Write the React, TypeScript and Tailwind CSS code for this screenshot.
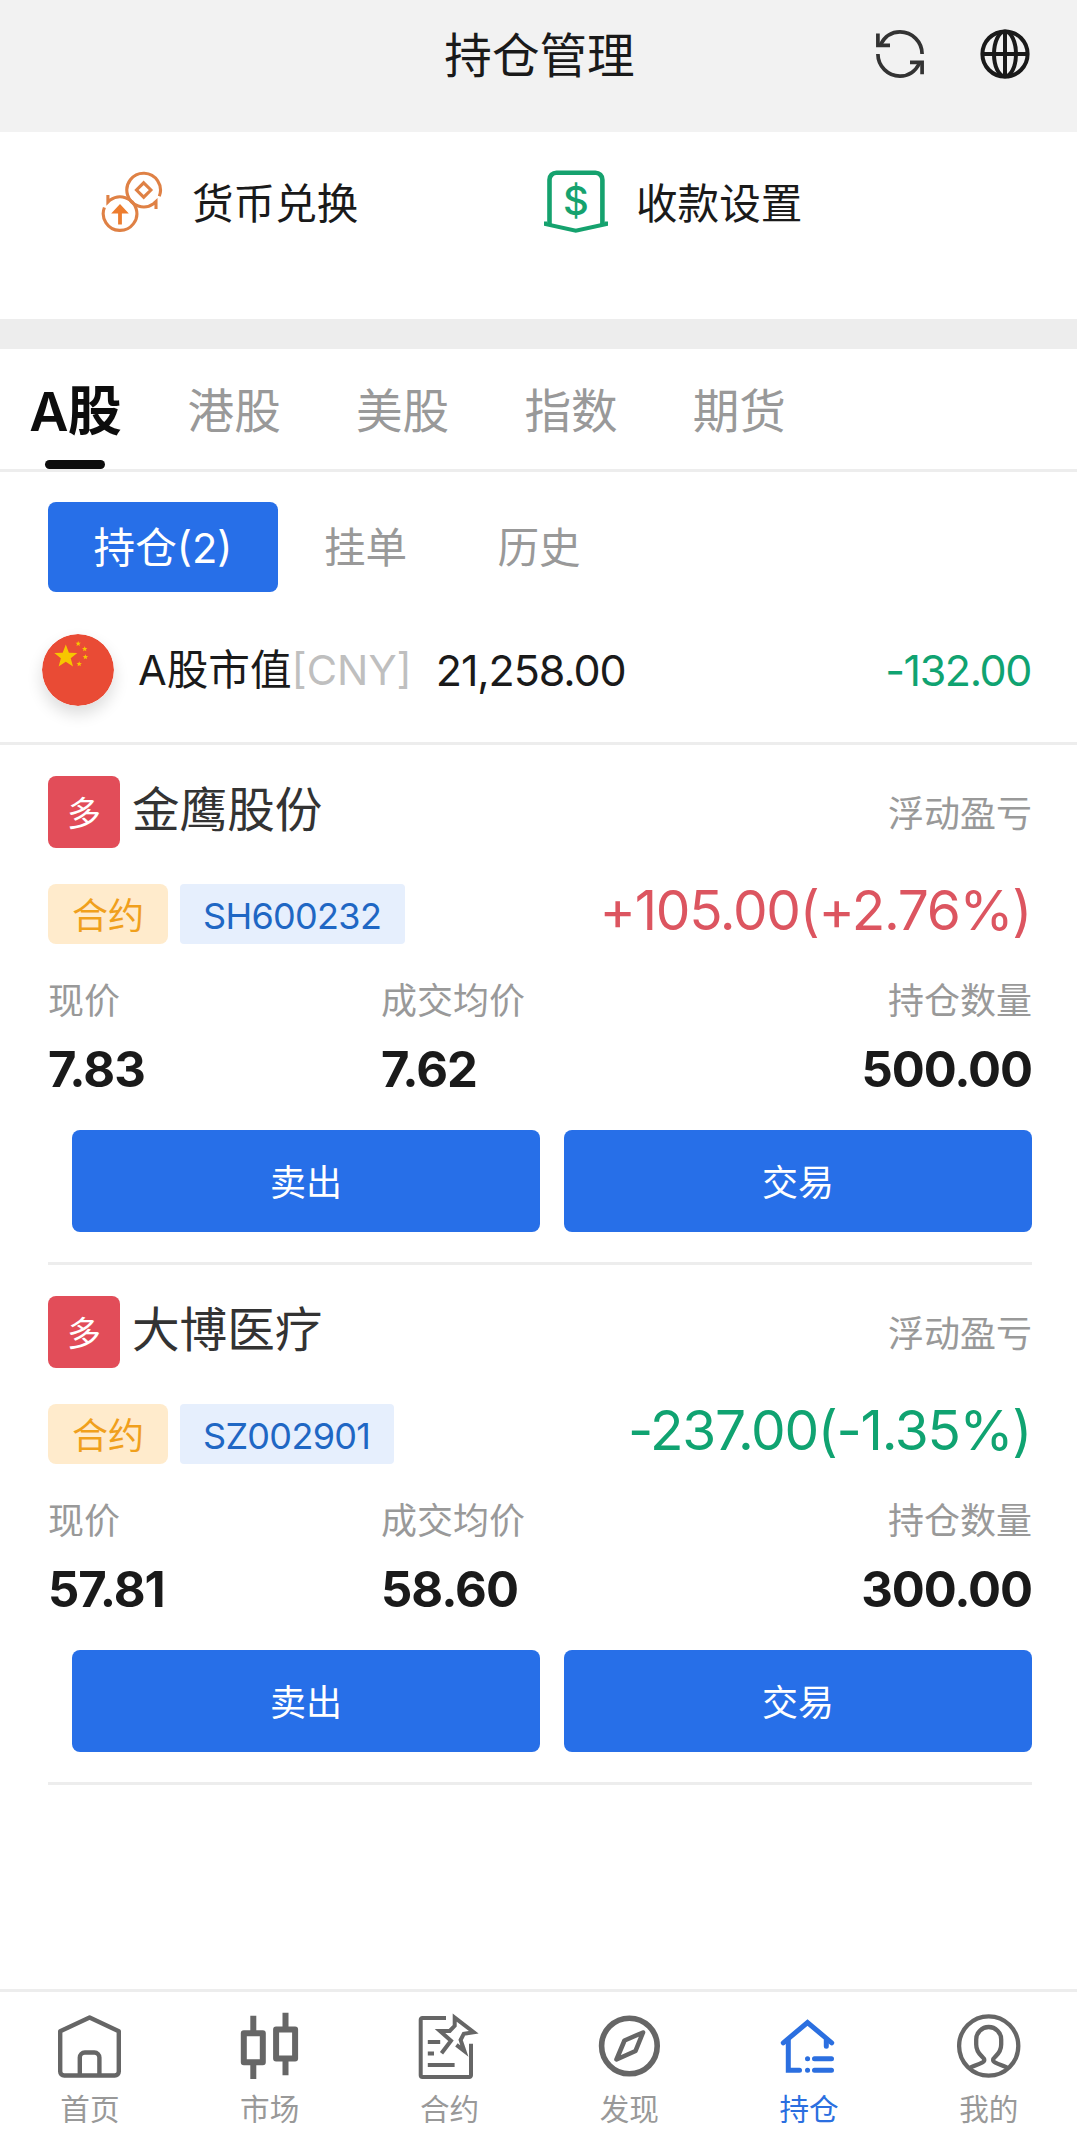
import { ReactNode } from "react";
import clsx from "clsx";

type Holding = {
  name: string;
  code: string;
  pnl: string;
  up: boolean;
  price: string;
  cost: string;
  amount: string;
};

const holdings: Holding[] = [
  {
    name: "金鹰股份",
    code: "SH600232",
    pnl: "+105.00(+2.76%)",
    up: true,
    price: "7.83",
    cost: "7.62",
    amount: "500.00",
  },
  {
    name: "大博医疗",
    code: "SZ002901",
    pnl: "-237.00(-1.35%)",
    up: false,
    price: "57.81",
    cost: "58.60",
    amount: "300.00",
  },
];

const markets = ["港股", "美股", "指数", "期货"];

function RefreshIcon() {
  return (
    <svg width="48" height="48" viewBox="0 0 48 48" fill="none" stroke="#333" strokeWidth="3.7">
      <path d="M46.1 24A22.2 22.2 0 0 0 24 1.9C15.5 1.9 8.5 7 4.6 14.5" />
      <path d="M1.9 3.5V15.3H14" />
      <path d="M1.9 24A22.2 22.2 0 0 0 24 46.1C32.5 46.1 39.5 41 43.4 33.5" />
      <path d="M46.1 44.2V32.3H34" />
    </svg>
  );
}

function GlobeIcon() {
  return (
    <svg width="50" height="50" viewBox="0 0 50 50" fill="none" stroke="#1a1a1a" strokeWidth="4">
      <circle cx="25" cy="25" r="22.6" />
      <ellipse cx="25" cy="25" rx="11" ry="22.6" />
      <path d="M25 2v46M2 25h46" />
    </svg>
  );
}

function ExchangeIcon() {
  return (
    <svg width="62" height="64" viewBox="0 0 62 64" fill="none" stroke="#df8145" strokeWidth="3.1">
      <path d="M58.3 26.2A16.8 16.8 0 1 0 52.5 33.7L55 31.5V39" />
      <path d="M42.7 12.8l7.2 7.2-7.2 7.2-7.2-7.2z" />
      <path d="M3.4 37.5A16.8 16.8 0 1 0 9.2 30L6.9 32.2V25" />
      <path d="M19 34l8.8 9.6h-6.9v11h-3.8v-11h-6.9z" fill="#ed7d2f" stroke="none" />
    </svg>
  );
}

function PaymentIcon() {
  return (
    <svg width="64" height="64" viewBox="0 0 64 64" fill="none" stroke="#15a26e" strokeWidth="4.6">
      <path d="M5.5 54V9.7a7 7 0 0 1 7-7h38.9a7 7 0 0 1 7 7V54" />
      <path d="M1 51.6v2.3l30.8 6.9 30.8-6.9v-2.3" strokeWidth="4" />
      <text
        x="31.8"
        y="44.8"
        fontSize="40"
        fontWeight="500"
        fontFamily="Inter"
        textAnchor="middle"
        fill="#15a26e"
        stroke="none"
      >
        $
      </text>
    </svg>
  );
}

const STAR = "M0-10L2.6-3.2 9.6-3 4.1 1.4 6 8.3 0 4.4-6 8.3-4.1 1.4-9.6-3-2.6-3.2z";

function ChinaFlag() {
  return (
    <svg
      width="72"
      height="72"
      viewBox="0 0 72 72"
      className="rounded-full shadow-[0_8px_16px_rgba(0,0,0,0.14)]"
    >
      <circle cx="36" cy="36" r="36" fill="#e94b35" />
      <g fill="#f7c600">
        <path d={STAR} transform="translate(23.8 22.5) scale(1.2)" />
        <path d={STAR} transform="translate(36.2 9.7) scale(.28)" />
        <path d={STAR} transform="translate(42.7 15) scale(.28)" />
        <path d={STAR} transform="translate(43.4 23) scale(.28)" />
        <path d={STAR} transform="translate(37.2 30) scale(.28)" />
      </g>
    </svg>
  );
}

function NavIcon({ children, color = "#666" }: { children: ReactNode; color?: string }) {
  return (
    <svg width="72" height="72" viewBox="0 0 72 72" fill="none" stroke={color}>
      {children}
    </svg>
  );
}

const navItems = [
  {
    label: "首页",
    icon: (
      <NavIcon>
        <g strokeWidth="4.4" strokeLinejoin="round">
          <path d="M35.6 7.5L64.8 21.3V61.5a4 4 0 0 1-4 4H10.2a4 4 0 0 1-4-4V21.3z" />
          <path d="M25.8 65V47.5a5 5 0 0 1 5-5h9.6a5 5 0 0 1 5 5V65" />
        </g>
      </NavIcon>
    ),
  },
  {
    label: "市场",
    icon: (
      <NavIcon>
        <g strokeWidth="6" strokeLinejoin="round">
          <rect x="9.8" y="23.3" width="19" height="29" />
          <path d="M19.3 5.7V22M19.3 53v16" />
          <rect x="42.1" y="19.6" width="19" height="29" />
          <path d="M51.5 2.7V19M51.5 49v16.3" />
        </g>
      </NavIcon>
    ),
  },
  {
    label: "合约",
    icon: (
      <NavIcon>
        <g strokeWidth="4">
          <path d="M33 8H9.4a1.7 1.7 0 0 0-1.7 1.7v55.6A1.7 1.7 0 0 0 9.4 67h46.9a1.7 1.7 0 0 0 1.7-1.7V33.7" />
          <path d="M14.8 32h12.4M14.8 43.5H21M14.8 55h26.8" />
          <path d="M28.5 43.3L38 30.7 27 21h9.7l5-5.2V7.6l19 14.6-9.9 1.6-3.2 6.2 3.8 11-8-6.2" />
        </g>
      </NavIcon>
    ),
  },
  {
    label: "发现",
    icon: (
      <NavIcon>
        <circle cx="36.4" cy="36" r="27.8" strokeWidth="5.6" />
        <path d="M50 22.5L31.5 30.5 23.5 49.5 42.5 41z" strokeWidth="4.6" strokeLinejoin="round" />
      </NavIcon>
    ),
  },
  {
    label: "持仓",
    active: true,
    icon: (
      <NavIcon color="#2b6fe0">
        <g strokeWidth="5" strokeLinecap="round">
          <path d="M10.3 32.8L34.5 12.6 58.7 32.8" />
          <path d="M15.3 30V60.3H26.5M53.3 30v6.3" />
          <path d="M34.5 48.7h.1M34.5 60.3h.1M41.5 48.7H58.5M41.5 60.3H58.5" />
        </g>
      </NavIcon>
    ),
  },
  {
    label: "我的",
    icon: (
      <NavIcon>
        <g strokeWidth="4.3" strokeLinejoin="round">
          <circle cx="35.7" cy="36" r="29.6" />
          <path d="M15.8 58.5C21 55 31.3 53.5 31.3 50 31.3 46.5 23.2 45 23.2 34.5V29.5a12.5 12.5 0 0 1 25 0V34.5C48.2 45 40.1 46.5 40.1 50 40.1 53.5 50.4 55 55.6 58.5" />
        </g>
      </NavIcon>
    ),
  },
];

function HoldingCard({ item }: { item: Holding }) {
  return (
    <div className="mx-12 border-b-[3px] border-[#ededed] pt-[31px] pb-[30px]">
      <div className="flex h-[72px] items-center">
        <div className="flex size-[72px] items-center justify-center rounded-lg bg-[#e24d59] pt-[3px] text-[34px] text-white">
          多
        </div>
        <div className="ml-3 pb-[4px] text-[47.6px] leading-[48px] text-[#333]">{item.name}</div>
        <div className="ml-auto pt-[3px] text-[36px] text-[#999]">浮动盈亏</div>
      </div>

      <div className="mt-9 flex h-[60px] items-center">
        <div className="flex h-[60px] items-center rounded-lg bg-[#ffebcc] px-6 pt-[5px] text-[36px] leading-[55px] text-[#f0a01c]">
          合约
        </div>
        <div className="ml-3 flex h-[60px] items-center rounded bg-[#e6effd] pr-6 pl-[23px] pt-[5px] text-[36px] leading-[55px] tracking-[-0.7px] text-[#1f67c4]">
          {item.code}
        </div>
        <div
          className={clsx(
            "ml-auto pr-[1px] pb-2 text-[55px] leading-[55px] tracking-[-1.3px]",
            item.up ? "text-[#dc5560]" : "text-[#10a371]"
          )}
        >
          {item.pnl}
        </div>
      </div>

      <div className="mt-[39px] grid grid-cols-[333px_1fr_auto] gap-y-[26px]">
        <div className="text-[36px] leading-9 text-[#999]">现价</div>
        <div className="text-[36px] leading-9 text-[#999]">成交均价</div>
        <div className="text-right text-[36px] leading-9 text-[#999]">持仓数量</div>
        <div className="pt-[1px] text-[49px] leading-[47px] font-bold tracking-[-1px]">
          {item.price}
        </div>
        <div className="pt-[1px] text-[49px] leading-[47px] font-bold tracking-[-1px]">
          {item.cost}
        </div>
        <div className="pt-[1px] text-right text-[49px] leading-[47px] font-bold tracking-[-1.1px]">
          {item.amount}
        </div>
      </div>

      <div className="mt-[37px] ml-6 grid grid-cols-2 gap-6">
        <button className="h-[102px] rounded-lg bg-[#276fe8] pt-[4px] text-[36px] text-white">
          卖出
        </button>
        <button className="h-[102px] rounded-lg bg-[#276fe8] pt-[4px] text-[36px] text-white">
          交易
        </button>
      </div>
    </div>
  );
}

export default function App() {
  return (
    <div className="h-[2142px] w-full overflow-hidden bg-white font-['Inter','Noto_Sans_CJK_SC',sans-serif] text-[#1a1a1a]">
      <div className="flex h-full w-[1080px] flex-col">
        <header className="grid h-[132px] grid-cols-[1fr_auto_1fr] bg-[#f2f2f2] pt-[29px] pr-[50px]">
          <div className="pl-[50px]" />
          <h1 className="pt-[3px] pl-[49px] text-[47.6px] leading-[48px]">持仓管理</h1>
          <div className="flex h-[50px] items-center justify-end gap-[56px]">
            <RefreshIcon />
            <GlobeIcon />
          </div>
        </header>

        <section className="flex h-[187px] pt-[38px] pl-[101px] text-[41.6px]">
          <div className="flex h-[64px] w-[443px] items-center gap-[29px]">
            <ExchangeIcon />
            <span className="pt-[4px] leading-[64px]">货币兑换</span>
          </div>
          <div className="flex h-[64px] items-center gap-[28px]">
            <PaymentIcon />
            <span className="pt-[4px] leading-[64px]">收款设置</span>
          </div>
        </section>

        <div className="h-[30px] shrink-0 bg-[#ededed]" />

        <div className="flex h-[123px] shrink-0 border-b-[3px] border-[#ededed]">
          <div className="flex w-[150px] flex-col items-center justify-between pt-[37px]">
            <span className="text-[54px] leading-[52px] font-semibold tracking-[-1px] text-[#0d0d0d]">
              A股
            </span>
            <span className="h-[9px] w-[60px] rounded-full bg-[#0d0d0d]" />
          </div>
          {markets.map((market) => (
            <div
              key={market}
              className="w-[168.4px] pt-[39px] text-center text-[46.6px] leading-[47px] text-[#999]"
            >
              {market}
            </div>
          ))}
        </div>

        <div className="flex h-[120px] shrink-0 items-end px-12 text-[41.6px] text-[#999]">
          <div className="h-[90px] w-[230px] rounded-lg bg-[#276fe8] pt-[3px] text-center leading-[87px] text-white">
            持仓(2)
          </div>
          <div className="h-[90px] w-[175px] pt-[3px] text-center leading-[87px]">挂单</div>
          <div className="h-[90px] w-[172px] pt-[3px] text-center leading-[87px]">历史</div>
        </div>

        <div className="flex h-[153px] shrink-0 items-center border-b-[3px] border-[#ededed] pt-[5px] pr-12 pl-[42px] text-[41.6px]">
          <ChinaFlag />
          <span className="ml-[24px] pt-[2px]">A股市值</span>
          <span className="pt-[2px] text-[#bfbfbf]">[CNY]</span>
          <span className="ml-[24px] pt-[2px] text-[43px] tracking-[-1.1px]">21,258.00</span>
          <span className="ml-auto pt-[2px] pr-[1px] text-[43px] tracking-[-1.4px] text-[#10a371]">
            -132.00
          </span>
        </div>

        {holdings.map((item) => (
          <HoldingCard key={item.code} item={item} />
        ))}

        <nav className="mt-auto flex h-[153px] shrink-0 border-t-[3px] border-[#ededed] pt-[18px]">
          {navItems.map((item) => (
            <div key={item.label} className="flex w-[179.8px] flex-col items-center">
              {item.icon}
              <span
                className={clsx(
                  "mt-[12px] text-[29.6px] leading-[30px]",
                  item.active ? "text-[#2b6fe0]" : "text-[#999]"
                )}
              >
                {item.label}
              </span>
            </div>
          ))}
        </nav>
      </div>
    </div>
  );
}
